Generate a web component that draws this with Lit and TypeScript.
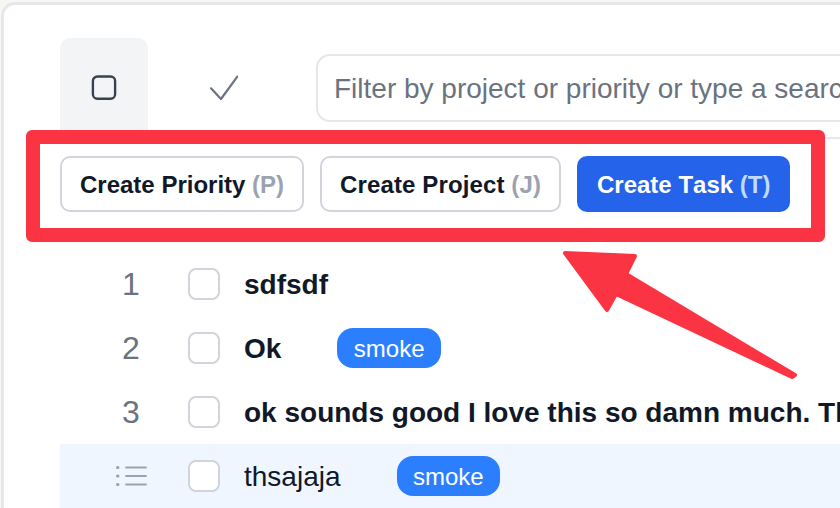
import { LitElement, html, css, svg } from "lit";
import { customElement } from "lit/decorators.js";

@customElement("app-root")
export class AppRoot extends LitElement {
  static styles = css`
    :host {
      display: block;
      width: 840px;
      height: 508px;
      overflow: hidden;
      background: #f6f7f3;
      font-family: "Liberation Sans", Arial, sans-serif;
      font-kerning: none;
      color: #111827;
      position: relative;
    }
    .card {
      box-sizing: border-box;
      width: 900px;
      height: 506px;
      margin: 2px 0 0 1px;
      padding: 33px 0 0 56px;
      background: #fff;
      border: 3px solid #e5e7eb;
      border-right: none;
      border-bottom: none;
      border-top-left-radius: 14px;
    }
    .toolbar {
      box-sizing: border-box;
      height: 101px;
      display: flex;
      align-items: flex-start;
      border-bottom: 2px solid #e5e7eb;
    }
    .toggle {
      width: 88px;
      height: 99px;
      flex: none;
      display: flex;
      align-items: flex-start;
      justify-content: center;
      padding-top: 36px;
      box-sizing: border-box;
      border-radius: 10px 10px 0 0;
    }
    .toggle.on { background: #f3f4f6; }
    .toggle.off { margin-left: 32px; }
    .toggle svg { width: 28px; height: 28px; display: block; }
    .filter {
      flex: none;
      box-sizing: border-box;
      width: 800px;
      height: 68px;
      margin: 16px 0 0 48px;
      padding: 2px 16px 0;
      border: 2px solid #e5e7eb;
      border-radius: 14px;
      background: #fff;
      font: 400 28px "Liberation Sans", Arial, sans-serif;
      font-kerning: none;
      outline: none;
    }
    .filter::placeholder { color: #6b7280; opacity: 1; }
    .rows { margin-top: 113px; width: 840px; }
    .row {
      box-sizing: border-box;
      height: 64px;
      display: flex;
      align-items: center;
      padding-left: 16px;
      white-space: nowrap;
    }
    .row.hover { background: #eff6ff; }
    .num {
      width: 110px;
      margin-right: 2px;
      flex: none;
      text-align: center;
      font-size: 32px;
      line-height: 36px;
      color: #6b7280;
    }
    .num svg { display: block; margin: 0 0 0 40px; width: 32px; height: 24px; }
    .box {
      width: 32px;
      height: 32px;
      flex: none;
      box-sizing: border-box;
      background: #fff;
      border: 2px solid #d1d5db;
      border-radius: 8px;
      margin-right: 24px;
    }
    .title { font-size: 28px; font-weight: 400; padding-top: 2px; }
    .title.bold { font-weight: 700; }
    .chip {
      margin-left: 56px;
      height: 40px;
      box-sizing: border-box;
      padding: 2px 16.500px 0;
      display: flex;
      align-items: center;
      background: #2b7fff;
      color: #fff;
      font-size: 24px;
      border-radius: 16px;
    }
    .callout {
      position: absolute;
      left: 26px;
      top: 130px;
      width: 799px;
      height: 112px;
      box-sizing: border-box;
      border: 14px solid #fb3444;
      border-radius: 6px;
      background: #fff;
      padding: 12px 20px;
      display: flex;
      gap: 16px;
      align-items: flex-start;
    }
    .btn {
      box-sizing: border-box;
      height: 56px;
      padding: 2px 18px 0;
      display: flex;
      align-items: center;
      border: 2px solid #d1d5db;
      border-radius: 10px;
      background: #fff;
      color: #111827;
      font-size: 24px;
      font-weight: 700;
      white-space: pre;
    }
    .btn.wide { letter-spacing: 0.12px; }
    .btn .key { color: #9ca3af; }
    .btn.primary {
      background: #2563eb;
      border-color: #2563eb;
      color: #fff;
    }
    .btn.primary .key { color: #bfdbfe; }
    .arrow { position: absolute; left: 0; top: 0; width: 840px; height: 508px; pointer-events: none; }
  `;

  private list = svg`<svg viewBox="0 0 32 24" fill="none" stroke="#9ca3af" stroke-width="2" stroke-linecap="round"><path d="M10 3.500h20M10 12h20M10 20.500h20"/><path d="M1.500 3.500h.5M1.500 12h.5M1.500 20.500h.5" stroke-width="3"/></svg>`;

  render() {
    return html`
      <div class="card">
        <div class="toolbar">
          <div class="toggle on">
            <svg viewBox="0 0 28 28" fill="none" stroke="#374151" stroke-width="2.4"><rect x="2.900" y="2.500" width="22.200" height="22.200" rx="4.500"/></svg>
          </div>
          <div class="toggle off">
            <svg viewBox="0 0 28 28" fill="none" stroke="#6b7280" stroke-width="2.2" stroke-linecap="round" stroke-linejoin="round"><path d="M1 14.300 L11 25 L27.300 2.700"/></svg>
          </div>
          <input class="filter" placeholder="Filter by project or priority or type a search term" />
        </div>
        <div class="rows">
          <div class="row"><div class="num">1</div><div class="box"></div><div class="title bold">sdfsdf</div></div>
          <div class="row"><div class="num">2</div><div class="box"></div><div class="title bold">Ok</div><div class="chip">smoke</div></div>
          <div class="row"><div class="num">3</div><div class="box"></div><div class="title bold">ok sounds good I love this so damn much. Thank you</div></div>
          <div class="row hover"><div class="num">${this.list}</div><div class="box"></div><div class="title">thsajaja</div><div class="chip">smoke</div></div>
        </div>
      </div>
      <div class="callout">
        <div class="btn"><span>Create Priority <span class="key">(P)</span></span></div>
        <div class="btn wide"><span>Create Project <span class="key">(J)</span></span></div>
        <div class="btn primary"><span>Create Task <span class="key">(T)</span></span></div>
      </div>
      <svg class="arrow" viewBox="0 0 840 508">
        <path fill="#fb3444" stroke="#fb3444" stroke-width="4" stroke-linejoin="round"
          d="M565 253 L635 256 L626 274 L795 375 L792 377 L616 294 L607 310 Z"/>
      </svg>
    `;
  }
}
